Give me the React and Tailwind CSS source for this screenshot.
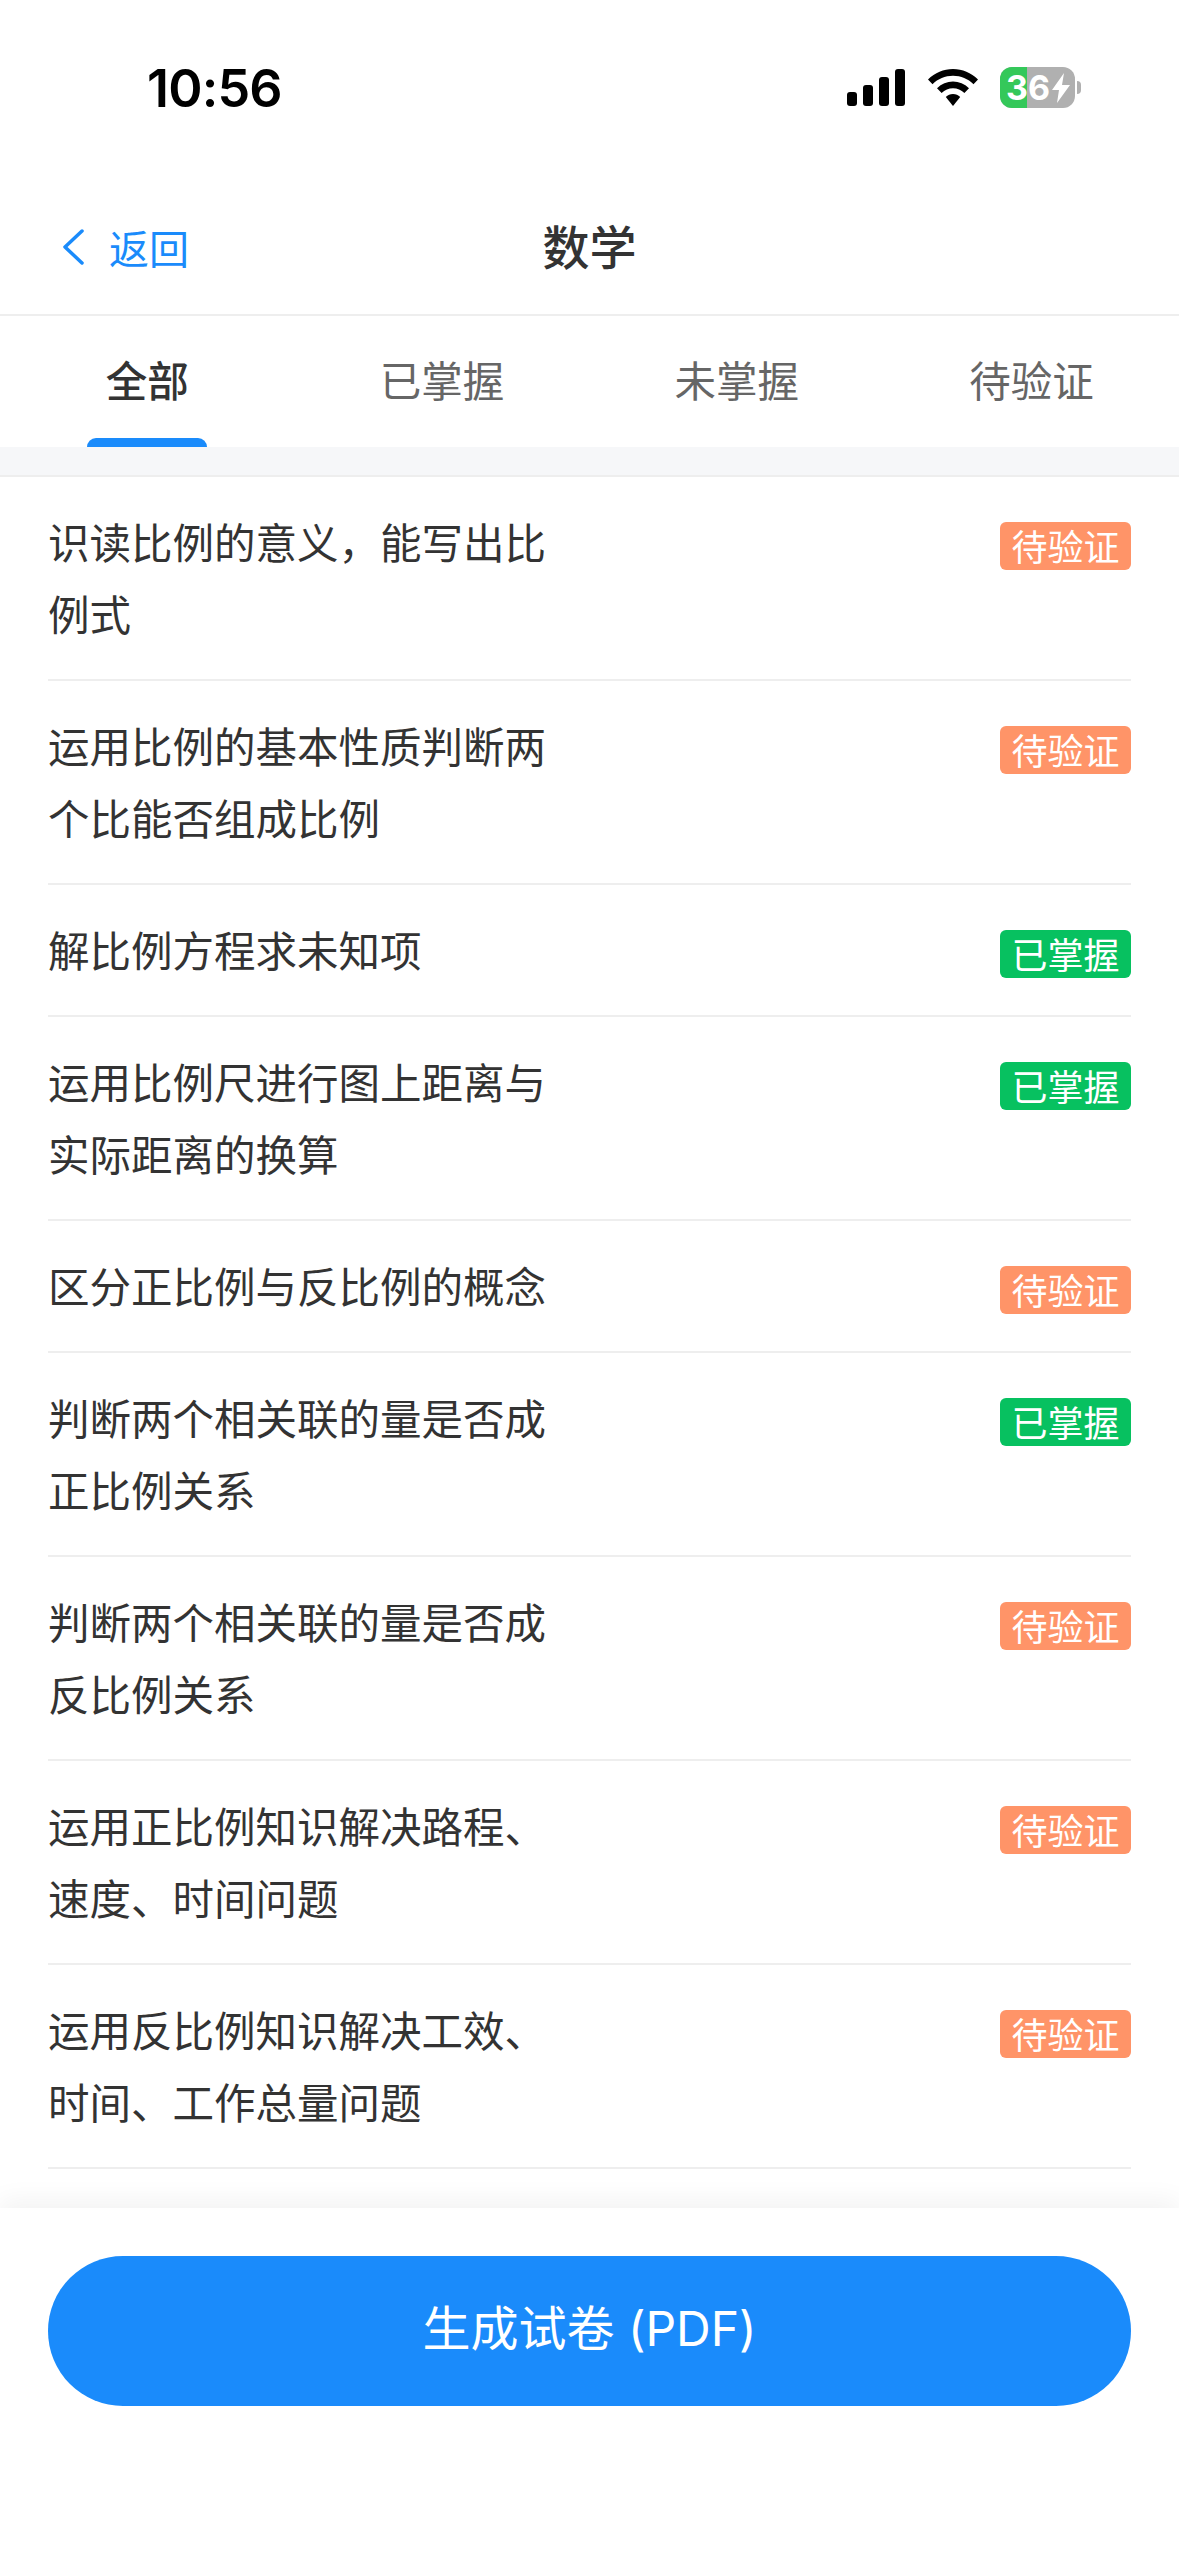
const rows = [
  { lines: ["识读比例的意义，能写出比", "例式"], status: "pending" },
  { lines: ["运用比例的基本性质判断两", "个比能否组成比例"], status: "pending" },
  { lines: ["解比例方程求未知项"], status: "done" },
  { lines: ["运用比例尺进行图上距离与", "实际距离的换算"], status: "done" },
  { lines: ["区分正比例与反比例的概念"], status: "pending" },
  { lines: ["判断两个相关联的量是否成", "正比例关系"], status: "done" },
  { lines: ["判断两个相关联的量是否成", "反比例关系"], status: "pending" },
  { lines: ["运用正比例知识解决路程、", "速度、时间问题"], status: "pending" },
  { lines: ["运用反比例知识解决工效、", "时间、工作总量问题"], status: "pending" },
];

const tabs = ["全部", "已掌握", "未掌握", "待验证"];

const StatusBar = () => (
  <div className="flex h-[175px] items-start justify-between pl-[147px] pr-[98px] pt-[57px]">
    <span className="font-['Inter',sans-serif] text-[52px] font-semibold leading-[64px] tracking-[-0.8px] text-black">
      10:56
    </span>
    <div className="flex items-center pt-[10px]">
      {/* signal */}
      <svg width="58" height="37" viewBox="0 0 58 37" fill="#000">
        <rect x="0" y="23" width="10" height="14" rx="3" />
        <rect x="16" y="16" width="10" height="21" rx="3" />
        <rect x="32" y="8" width="10" height="29" rx="3" />
        <rect x="48" y="0" width="10" height="37" rx="3" />
      </svg>
      {/* wifi */}
      <svg width="50" height="37" viewBox="0 0 50 37" className="ml-[23px]" fill="#000">
        <path d="M25 0C15.500 0 7 3.600 0 10.500L4.500 15.200C10 9.700 17 6.700 25 6.700C33 6.700 40 9.700 45.500 15.200L50 10.500C43 3.600 34.500 0 25 0Z" />
        <path d="M25 12.500C19 12.500 13.500 14.800 9 19.200L13.600 24C16.800 21 20.700 19.300 25 19.300C29.300 19.300 33.200 21 36.400 24L41 19.200C36.500 14.800 31 12.500 25 12.500Z" />
        <path d="M25 25C22.200 25 19.700 26 17.800 28L25 37L32.200 28C30.300 26 27.800 25 25 25Z" />
      </svg>
      {/* battery */}
      <div className="ml-[22px] flex items-center">
        <div className="relative flex h-[41px] w-[75px] items-center overflow-hidden rounded-[12px] bg-[#b0b0b0]">
          <div className="absolute inset-y-0 left-0 w-[27px] bg-[#34c85a]" />
          <span className="relative pl-[6px] font-['Inter',sans-serif] text-[34px] font-bold leading-none text-white">
            36
          </span>
          <svg width="18" height="30" viewBox="0 0 18 30" className="relative ml-[2px]" fill="#fff">
            <path d="M12 0L0 17H7L5 30L18 12H10Z" />
          </svg>
        </div>
        <div className="ml-[2px] h-[13px] w-[4px] rounded-r-full bg-[#b0b0b0]" />
      </div>
    </div>
  </div>
);

const NavBar = () => (
  <div className="relative flex h-[141px] items-center justify-center border-b-2 border-[#eeeeee] pt-[1px]">
    <div className="absolute left-[62px] top-[52px] flex items-center">
      <svg width="22" height="36" viewBox="0 0 22 36" fill="none" stroke="#1a8bfb" strokeWidth="3.500" strokeLinecap="round" strokeLinejoin="round">
        <path d="M20 2L3 18L20 34" />
      </svg>
      <span className="ml-[25px] text-[40px] leading-[40px] text-[#1a8bfb]">返回</span>
    </div>
    <span className="text-[47px] font-medium text-[#333333]">数学</span>
  </div>
);

const Tabs = () => (
  <div className="grid h-[131px] grid-cols-4">
    {tabs.map((t, i) => (
      <div key={t} className="flex flex-col items-center justify-end">
        <span className={i === 0 ? "pb-[29px] text-[41.500px] font-medium leading-[60px] text-[#333333]" : "pb-[29px] text-[41.500px] leading-[60px] text-[#666666]"}>
          {t}
        </span>
        <div className={i === 0 ? "h-[9px] w-[120px] rounded-t-[9px] bg-[#1a8bfb]" : "h-[9px] w-[120px]"} />
      </div>
    ))}
  </div>
);

const Badge = ({ status }) => (
  <span
    className={
      status === "done"
        ? "flex h-[48px] w-[131px] items-center justify-center rounded-[6px] bg-[#07c160] pb-[3px] text-[36px] leading-none text-white"
        : "flex h-[48px] w-[131px] items-center justify-center rounded-[6px] bg-[#ff9468] pb-[3px] text-[36px] leading-none text-white"
    }
  >
    {status === "done" ? "已掌握" : "待验证"}
  </span>
);

const Row = ({ row }) => (
  <div className="flex items-start justify-between border-b-2 border-[#eeeeee] pb-[30px] pt-[28px]">
    <div className="text-[41.500px] leading-[72px] text-[#333333]">
      {row.lines.map((l) => (
        <div key={l}>{l}</div>
      ))}
    </div>
    <div className="pt-[17px]">
      <Badge status={row.status} />
    </div>
  </div>
);

export default function App() {
  return (
    <div className="flex h-[2556px] w-[1179px] flex-col overflow-hidden bg-white font-['Noto_Sans_CJK_SC','Noto_Sans_CJK_JP',sans-serif]">
      <StatusBar />
      <NavBar />
      <Tabs />
      <div className="h-[30px] border-b-2 border-[#eeeeee] bg-[#f6f7f9]" />
      <div className="flex-1 overflow-hidden px-[48px]">
        {rows.map((r, i) => (
          <Row key={i} row={r} />
        ))}
      </div>
      <div className="relative h-[348px] bg-white px-[48px] pt-[48px] shadow-[0_-8px_24px_rgba(0,0,0,0.05)]">
        <button className="flex h-[150px] w-full items-center justify-center rounded-full bg-[#1a8bfb] pb-[4px] font-['Inter','Noto_Sans_CJK_SC',sans-serif] text-[48px] text-white">
          生成试卷 (PDF)
        </button>
      </div>
    </div>
  );
}
